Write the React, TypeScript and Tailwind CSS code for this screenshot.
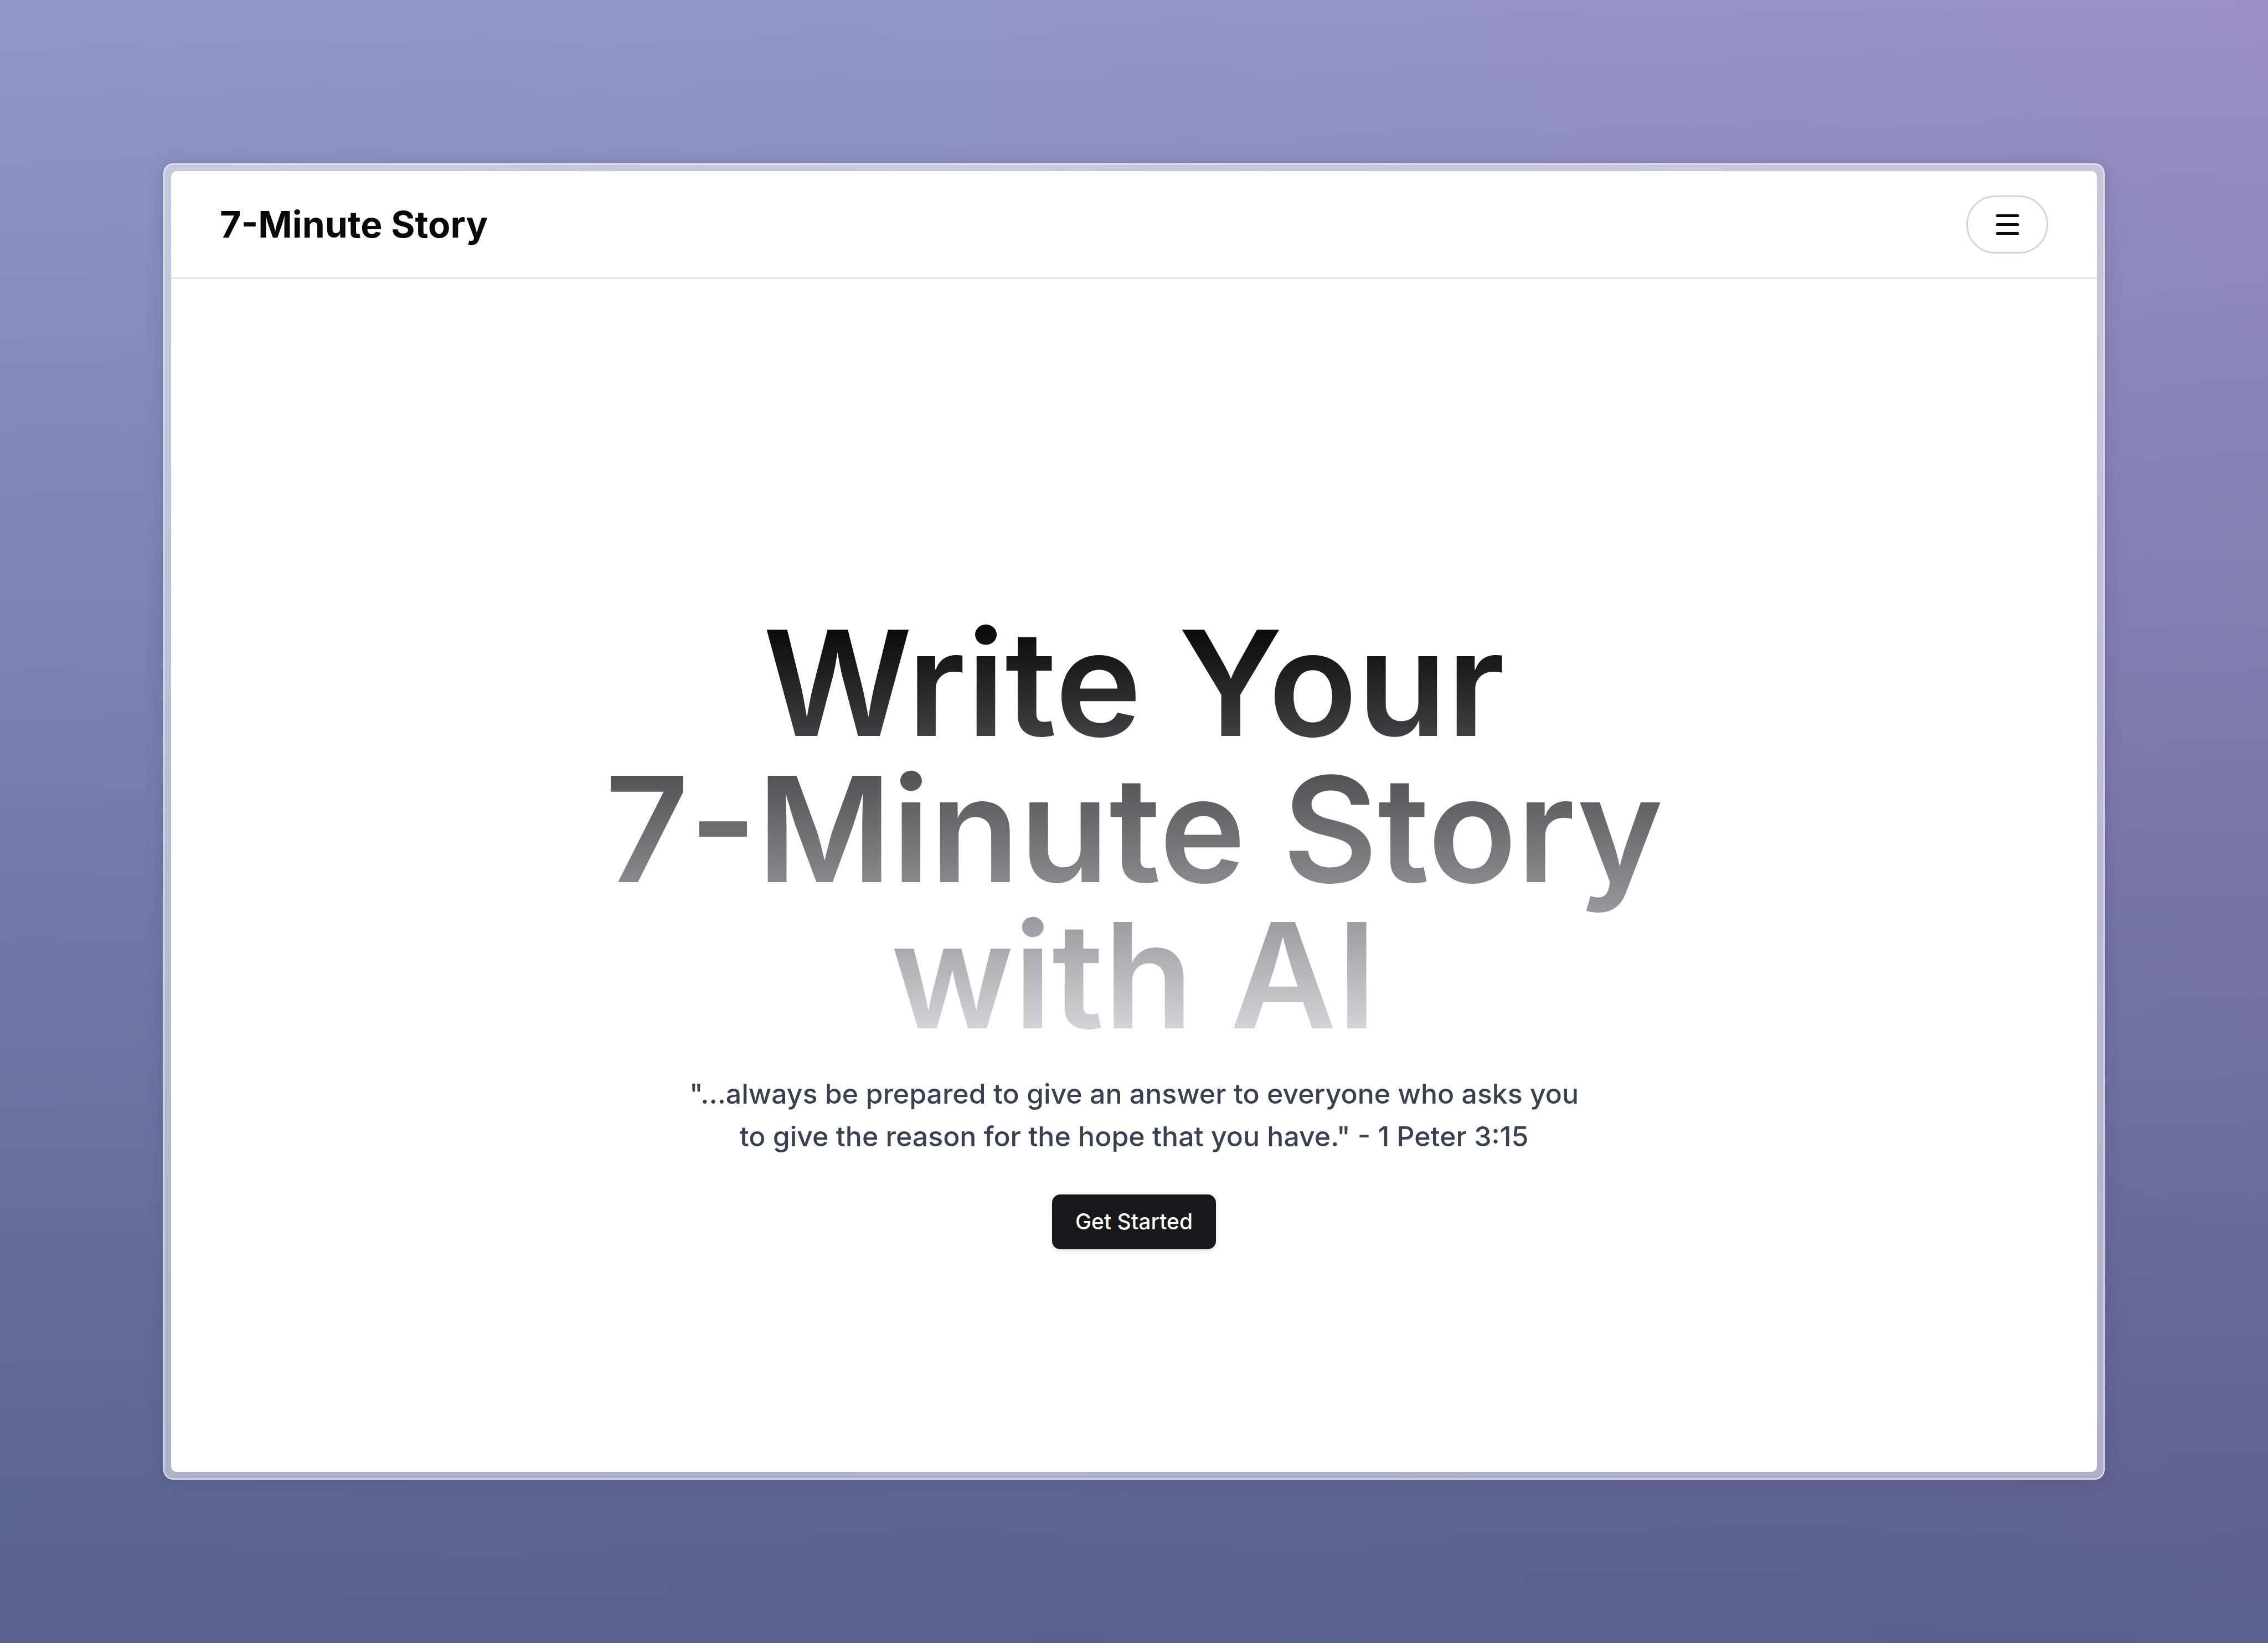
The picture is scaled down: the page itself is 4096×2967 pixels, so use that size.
import { Menu } from "lucide-react";

export default function App() {
  return (
    <div className="min-h-screen bg-[linear-gradient(to_right,#8f98c9,#9a90c6)] font-['Inter',sans-serif]">
      <div className="flex min-h-screen flex-col bg-[linear-gradient(to_bottom,rgba(50,60,100,0),rgba(50,60,100,0.6))] p-[295px]">
        <div className="flex flex-1 flex-col rounded-[18px] border-2 border-white/75 bg-white/50 p-[12px] shadow-[0_4px_32px_rgba(60,50,110,0.2)]">
          <div className="flex flex-1 flex-col overflow-hidden rounded-[10px] bg-white text-zinc-950">
            <header className="flex h-[195px] items-center justify-between border-b-[3px] border-zinc-200 px-[88px]">
              <a href="#" className="text-[66px] leading-none font-bold">
                7-Minute Story
              </a>
              <button
                type="button"
                aria-label="Open menu"
                className="flex h-[105px] w-[148px] items-center justify-center rounded-full border-[3px] border-gray-300"
              >
                <Menu size={55} strokeWidth={2.25} />
              </button>
            </header>
            <main className="flex flex-1 flex-col items-center justify-center pt-[194px] text-center">
              <h1 className="bg-[linear-gradient(to_bottom,#000000,#dcdce2)] bg-clip-text text-[264px] leading-none font-semibold text-transparent">
                Write Your
                <br />
                7-Minute Story
                <br />
                with AI
              </h1>
              <p className="mt-[44px] text-[50px] leading-[77px] font-medium text-[#374151]">
                "...always be prepared to give an answer to everyone who asks you
                <br />
                to give the reason for the hope that you have." - 1 Peter 3:15
              </p>
              <button
                type="button"
                className="mt-[66px] flex h-[99px] w-[296px] items-center justify-center rounded-[15px] bg-zinc-900 text-[39px] font-medium text-zinc-50 shadow-[0_3px_8px_rgba(0,0,0,0.12)]"
              >
                Get Started
              </button>
            </main>
          </div>
        </div>
      </div>
    </div>
  );
}
